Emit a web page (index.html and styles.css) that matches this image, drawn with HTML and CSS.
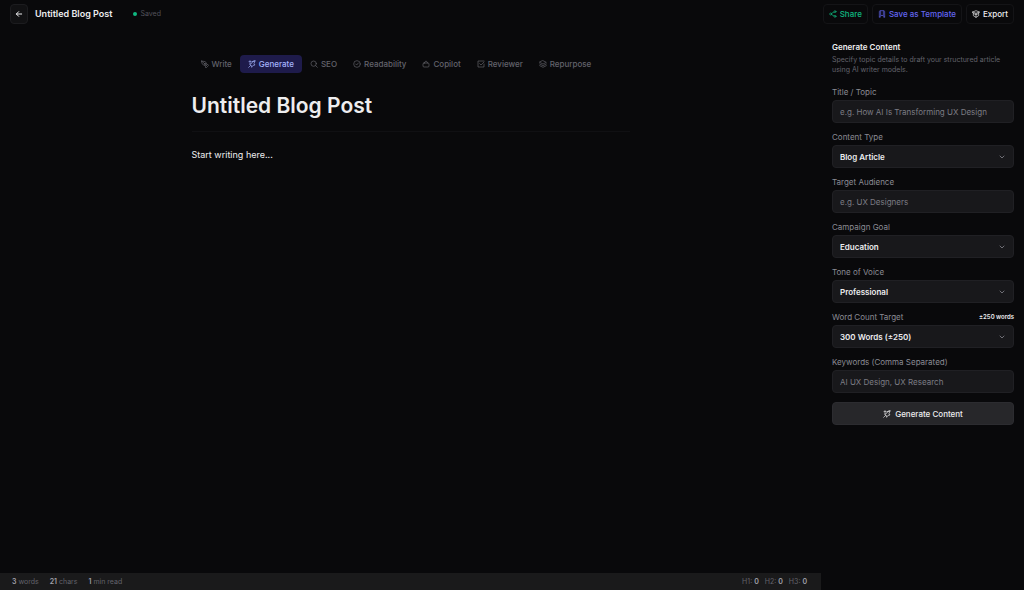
FILE: index.html
```html
<!DOCTYPE html>
<html lang="en">
<head>
    <meta charset="UTF-8">
    <meta name="viewport" content="width=device-width, initial-scale=1.0">
    <title>Untitled Blog Post</title>
    <link rel="stylesheet" href="styles.css">
</head>
<body>
    <header class="topbar">
        <button class="back-button" aria-label="Back">
            <svg class="icon" viewBox="0 0 24 24"><path d="M20 12H4M11 5l-7 7 7 7"/></svg>
        </button>
        <div class="doc-name">Untitled Blog Post</div>
        <div class="saved"><span class="saved-dot"></span>Saved</div>
        <div class="actions">
            <button class="action share">
                <svg class="icon" viewBox="0 0 24 24"><circle cx="18" cy="5" r="3"/><circle cx="5" cy="12" r="3"/><circle cx="18" cy="19" r="3"/><path d="M8 10l7-4M8 14l7 4"/></svg>
                Share
            </button>
            <button class="action template">
                <svg class="icon" viewBox="0 0 24 24"><path d="M4 21V5q0-3 3-3h10q3 0 3 3v16M8 3v16l4-4 4 4V3M4 21h3M17 21h3"/></svg>
                Save as Template
            </button>
            <button class="action export">
                <svg class="icon" viewBox="0 0 24 24"><path d="M2 6l10-4 10 4-3 5-7 3-7-3zM4 11v6l8 5 8-5v-6M2 6l10 4 10-4M12 10v12"/></svg>
                Export
            </button>
        </div>
    </header>
    <div class="workspace">
        <main class="main">
            <div class="editor">
                <nav class="tabs">
                    <button class="tab">
                        <svg class="icon" viewBox="0 0 24 24"><path d="M2 3l11 2 5 8-5 5-8-5zM2 3l9 8M13 20l7-7 3 3-7 7z"/><circle cx="12" cy="12" r="2"/></svg>
                        Write
                    </button>
                    <button class="tab active">
                        <svg class="icon" viewBox="0 0 24 24"><path d="M2 22l6-6M21 3l-3 8 3 4-6 1-4 6-2-7-5-3 7-2 3-5zM21 3l-9 2M6 2v5M3 5h6"/></svg>
                        Generate
                    </button>
                    <button class="tab">
                        <svg class="icon" viewBox="0 0 24 24"><circle cx="11" cy="11" r="8"/><path d="M17 17l5 5"/></svg>
                        SEO
                    </button>
                    <button class="tab">
                        <svg class="icon" viewBox="0 0 24 24"><circle cx="12" cy="12" r="10"/><path d="M8 12l3 3 5-6"/></svg>
                        Readability
                    </button>
                    <button class="tab">
                        <svg class="icon" viewBox="0 0 24 24"><rect x="3" y="9" width="18" height="12" rx="3"/><path d="M8 9V6l4-3 4 3v3"/></svg>
                        Copilot
                    </button>
                    <button class="tab">
                        <svg class="icon" viewBox="0 0 24 24"><path d="M21 12v9H3V3h18M8 11l4 4 9-9"/></svg>
                        Reviewer
                    </button>
                    <button class="tab">
                        <svg class="icon" viewBox="0 0 24 24"><path d="M12 2l10 5-10 5L2 7zM2 12l10 5 10-5M2 17l10 5 10-5"/></svg>
                        Repurpose
                    </button>
                </nav>
                <h1 class="title">Untitled Blog Post</h1>
                <p class="body-text">Start writing here...</p>
            </div>
            <footer class="statusbar">
                <span><b>3</b> words</span>
                <span><b>21</b> chars</span>
                <span><b>1</b> min read</span>
                <div class="headings">
                    <span>H1: <b>0</b></span>
                    <span>H2: <b>0</b></span>
                    <span>H3: <b>0</b></span>
                </div>
            </footer>
        </main>
        <aside class="sidebar">
            <h2 class="panel-title">Generate Content</h2>
            <p class="panel-text">Specify topic details to draft your structured article using AI writer models.</p>
            <form class="form">
                <div class="field">
                    <label for="topic">Title / Topic</label>
                    <input type="text" id="topic" class="control" placeholder="e.g. How AI Is Transforming UX Design">
                </div>
                <div class="field">
                    <label for="contentType">Content Type</label>
                    <div class="select">
                        <select id="contentType" class="control"><option>Blog Article</option></select>
                        <svg class="icon chevron" viewBox="0 0 24 24"><path d="M4 8l8 8 8-8"/></svg>
                    </div>
                </div>
                <div class="field">
                    <label for="audience">Target Audience</label>
                    <input type="text" id="audience" class="control" placeholder="e.g. UX Designers">
                </div>
                <div class="field">
                    <label for="goal">Campaign Goal</label>
                    <div class="select">
                        <select id="goal" class="control"><option>Education</option></select>
                        <svg class="icon chevron" viewBox="0 0 24 24"><path d="M4 8l8 8 8-8"/></svg>
                    </div>
                </div>
                <div class="field">
                    <label for="tone">Tone of Voice</label>
                    <div class="select">
                        <select id="tone" class="control"><option>Professional</option></select>
                        <svg class="icon chevron" viewBox="0 0 24 24"><path d="M4 8l8 8 8-8"/></svg>
                    </div>
                </div>
                <div class="field">
                    <div class="label-row">
                        <label for="wordCount">Word Count Target</label>
                        <span class="hint">±250 words</span>
                    </div>
                    <div class="select">
                        <select id="wordCount" class="control"><option>300 Words (±250)</option></select>
                        <svg class="icon chevron" viewBox="0 0 24 24"><path d="M4 8l8 8 8-8"/></svg>
                    </div>
                </div>
                <div class="field">
                    <label for="keywords">Keywords (Comma Separated)</label>
                    <input type="text" id="keywords" class="control" placeholder="AI UX Design, UX Research">
                </div>
                <button type="button" class="submit">
                    <svg class="icon" viewBox="0 0 24 24"><path d="M2 22l6-6M21 3l-3 8 3 4-6 1-4 6-2-7-5-3 7-2 3-5zM21 3l-9 2M6 2v5M3 5h6"/></svg>
                    Generate Content
                </button>
            </form>
        </aside>
    </div>
</body>
</html>
```

FILE: styles.css
```css
* {
    box-sizing: border-box;
}
body {
    display: flex;
    flex-direction: column;
    min-height: 100vh;
    margin: 0;
    background-color: #09090b;
    color: #ededef;
    font-family: Inter, "Liberation Sans", sans-serif;
    font-size: 8px;
    line-height: 10px;
}
button, input, select {
    font: inherit;
    color: inherit;
}
button {
    display: flex;
    align-items: center;
    justify-content: center;
    border: none;
    cursor: pointer;
}
.icon {
    width: 8px;
    height: 8px;
    flex-shrink: 0;
    fill: none;
    stroke: currentColor;
    stroke-width: 2;
    stroke-linecap: round;
    stroke-linejoin: round;
}
/* Top bar */
.topbar {
    display: flex;
    align-items: center;
    height: 28px;
    padding: 0 10px;
}
.back-button {
    width: 18px;
    height: 20px;
    padding: 0;
    background-color: #111113;
    border: 1px solid #1c1c1f;
    border-radius: 4px;
}
.back-button .icon {
    stroke-width: 3;
}
.doc-name {
    margin-left: 7px;
    font-size: 9px;
    font-weight: 600;
}
.saved {
    display: flex;
    align-items: center;
    gap: 3px;
    margin-left: 21px;
    color: #52525b;
    font-size: 7px;
}
.saved-dot {
    width: 4px;
    height: 4px;
    background-color: #10b981;
    border-radius: 50%;
}
.actions {
    display: flex;
    gap: 4px;
    margin-left: auto;
}
.action {
    gap: 3px;
    height: 20px;
    padding: 0 5px;
    background-color: #09090b;
    border: 1px solid #141417;
    border-radius: 4px;
    font-weight: 500;
}
.share {
    color: #10b981;
}
.template {
    color: #6366f1;
}
/* Editor */
.workspace {
    display: flex;
    flex: 1;
}
.main {
    display: flex;
    flex: 1;
    flex-direction: column;
    min-width: 0;
}
.editor {
    flex: 1;
    width: 100%;
    max-width: 438px;
    margin: 0 auto;
    padding-top: 27px;
}
.tabs {
    display: flex;
    padding-left: 1px;
}
.tab {
    gap: 3px;
    height: 18px;
    padding: 0 8px;
    background: none;
    border-radius: 4px;
    color: #63636b;
    font-weight: 500;
}
.tab.active {
    background-color: #1e1b4b;
    color: #a5b4fc;
}
.title {
    margin: 17px 0 16px;
    padding-bottom: 9px;
    border-bottom: 1px solid #101013;
    font-size: 21px;
    font-weight: 600;
    line-height: 32px;
}
.body-text {
    margin: 0;
    font-size: 9px;
    line-height: 14px;
}
.statusbar {
    display: flex;
    align-items: center;
    gap: 11px;
    height: 17px;
    padding: 0 14px 0 12px;
    background-color: #1a1a1b;
    color: #63636b;
    font-size: 7px;
}
.statusbar b {
    color: #a1a1aa;
    font-weight: 600;
}
.headings {
    display: flex;
    gap: 6px;
    margin-left: auto;
}
/* Generate panel */
.sidebar {
    width: 203px;
    padding: 14px 10px 14px 11px;
}
.panel-title {
    margin: 0 0 3px;
    font-size: 8px;
    font-weight: 600;
}
.panel-text {
    margin: 0 0 12px;
    color: #63636b;
    font-size: 7px;
}
.form {
    display: flex;
    flex-direction: column;
    gap: 9px;
}
.field {
    display: flex;
    flex-direction: column;
    gap: 3px;
    color: #8b8b94;
}
.label-row {
    display: flex;
    justify-content: space-between;
}
.hint {
    color: #ededef;
    font-size: 6px;
    font-weight: 600;
}
.control {
    width: 100%;
    height: 23px;
    padding: 0 7px;
    background-color: #18181b;
    border: 1px solid #202024;
    border-radius: 4px;
    appearance: none;
}
.control::placeholder {
    color: #7c7c84;
    opacity: 1;
}
.select {
    display: grid;
    align-items: center;
}
.select > * {
    grid-area: 1 / 1;
}
.select .control {
    color: #ededef;
    font-weight: 600;
}
.chevron {
    justify-self: end;
    width: 6px;
    height: 6px;
    margin-right: 9px;
    stroke-width: 3;
    pointer-events: none;
}
.submit {
    gap: 4px;
    height: 23px;
    background-color: #27272a;
    border: 1px solid #2c2c30;
    border-radius: 4px;
    font-weight: 500;
}
```
